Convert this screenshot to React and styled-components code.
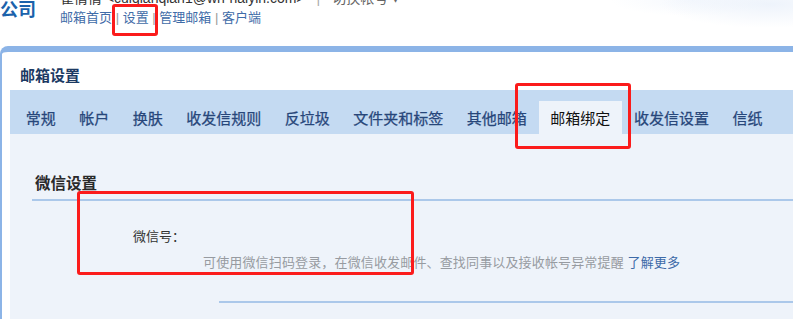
import React from "react";
import styled, { createGlobalStyle } from "styled-components";

const Global = createGlobalStyle`
  html, body { margin: 0; padding: 0; background: #ffffff; }
  body { font-family: "Liberation Sans", "Noto Sans CJK SC", sans-serif; overflow: hidden; }
`;

const cjk = `"Liberation Sans", "Noto Sans CJK SC", sans-serif`;

const Page = styled.div`
  position: relative;
  width: 793px;
  height: 319px;
  overflow: hidden;
  background: #fff;
`;

const Header = styled.header`
  height: 46px;
  display: flex;
  align-items: flex-start;
  background:
    radial-gradient(ellipse 110px 24px at 770px 4px, rgba(224, 234, 248, 0.55), rgba(255,255,255,0) 100%),
    radial-gradient(ellipse 80px 16px at 690px 0px, rgba(234, 241, 251, 0.45), rgba(255,255,255,0) 100%),
    #fff;
`;

const Logo = styled.div`
  width: 60px;
  font-family: ${cjk};
  font-size: 18px;
  font-weight: 700;
  line-height: 20px;
  color: #1b62ab;
`;

const UserInfo = styled.div`
  display: flex;
  flex-direction: column;
`;

const NameLine = styled.div`
  margin-top: -10px;
  height: 16px;
  line-height: 16px;
  font-size: 14px;
  color: #333;
  white-space: nowrap;
  display: flex;
  gap: 12px;
`;

const Muted = styled.span`
  color: ${(p) => p.$c || "#999"};
`;

const LinksLine = styled.div`
  margin-top: 4px;
  line-height: 16px;
  font-size: 13px;
  white-space: nowrap;
  color: #999;
`;

const HeadLink = styled.a`
  color: #3f6ca8;
  text-decoration: none;
`;

const Panel = styled.section`
  border-top: 6px solid #8cb4e7;
  border-left: 2px solid #8cb4e7;
  border-top-left-radius: 8px;
  background: #fff;
  height: 273px;
`;

const PanelTitle = styled.h1`
  margin: 0;
  height: 38px;
  box-sizing: border-box;
  padding: 14px 0 0 18px;
  line-height: 20px;
  font-size: 15px;
  font-weight: 700;
  color: #1c3a63;
  font-family: ${cjk};
`;

const TabBar = styled.nav`
  margin-left: 8px;
  height: 44px;
  background: #c4daf2;
  display: flex;
  align-items: flex-end;
  padding-left: 4px;
`;

const Tab = styled.div`
  height: 33px;
  display: flex;
  align-items: center;
  padding: 0 11.75px;
  font-size: 15px;
  font-weight: 400;
  font-family: ${cjk};
  white-space: nowrap;
  color: ${(p) => (p.$active ? "#111" : "#27467a")};
  background: ${(p) => (p.$active ? "#eef3fa" : "transparent")};
  -webkit-text-stroke: ${(p) => (p.$active ? "0" : "0.25px")};
`;

const Content = styled.div`
  margin-left: 8px;
  background: #eef3fa;
  height: 185px;
  padding-left: 22px;
  padding-top: 38px;
  box-sizing: border-box;
`;

const SectionTitle = styled.h2`
  margin: 0;
  padding: 0 0 3px 3px;
  line-height: 24px;
  font-size: 15.5px;
  font-weight: 700;
  color: #2a2a2a;
  border-bottom: 2px solid #abc8ea;
  font-family: ${cjk};
`;

const FieldRow = styled.div`
  margin-top: 26px;
  padding-left: 101px;
  line-height: 20px;
  font-size: 13px;
  color: #333;
`;

const Hint = styled.div`
  margin-top: 6px;
  padding-left: 171px;
  line-height: 20px;
  font-size: 13px;
  letter-spacing: 0.15px;
  color: #979ba1;
  white-space: nowrap;
`;

const MoreLink = styled.a`
  color: #3d6aa8;
  text-decoration: none;
`;

const Divider = styled.div`
  margin-top: 28px;
  margin-left: 187px;
  border-top: 2px solid #abc8ea;
`;

const Mark = styled.div`
  position: absolute;
  box-sizing: border-box;
  border: 3px solid #fb1b1b;
  border-radius: 3px;
  pointer-events: none;
`;

const tabs = ["常规", "帐户", "换肤", "收发信规则", "反垃圾", "文件夹和标签", "其他邮箱", "邮箱绑定", "收发信设置", "信纸"];

export default function App() {
  return (
    <Page>
      <Global />
      <Header>
        <Logo>公司</Logo>
        <UserInfo>
          <NameLine>
            <span>崔倩倩 &lt;cuiqianqian1@wh-haiyin.com&gt;</span>
            <Muted $c="#aaa">|</Muted>
            <Muted $c="#666">切换帐号 ▾</Muted>
          </NameLine>
          <LinksLine>
            <HeadLink>邮箱首页</HeadLink> | <HeadLink>设置</HeadLink> | <HeadLink>管理邮箱</HeadLink> | <HeadLink>客户端</HeadLink>
          </LinksLine>
        </UserInfo>
      </Header>
      <Panel>
        <PanelTitle>邮箱设置</PanelTitle>
        <TabBar>
          {tabs.map((t) => (
            <Tab key={t} $active={t === "邮箱绑定"}>{t}</Tab>
          ))}
        </TabBar>
        <Content>
          <SectionTitle>微信设置</SectionTitle>
          <FieldRow>微信号：</FieldRow>
          <Hint>
            可使用微信扫码登录，在微信收发邮件、查找同事以及接收帐号异常提醒 <MoreLink>了解更多</MoreLink>
          </Hint>
          <Divider />
        </Content>
      </Panel>
      <Mark style={{ left: 112, top: 4, width: 46, height: 32 }} />
      <Mark style={{ left: 515, top: 83, width: 116, height: 66 }} />
      <Mark style={{ left: 77, top: 191, width: 337, height: 84 }} />
    </Page>
  );
}
